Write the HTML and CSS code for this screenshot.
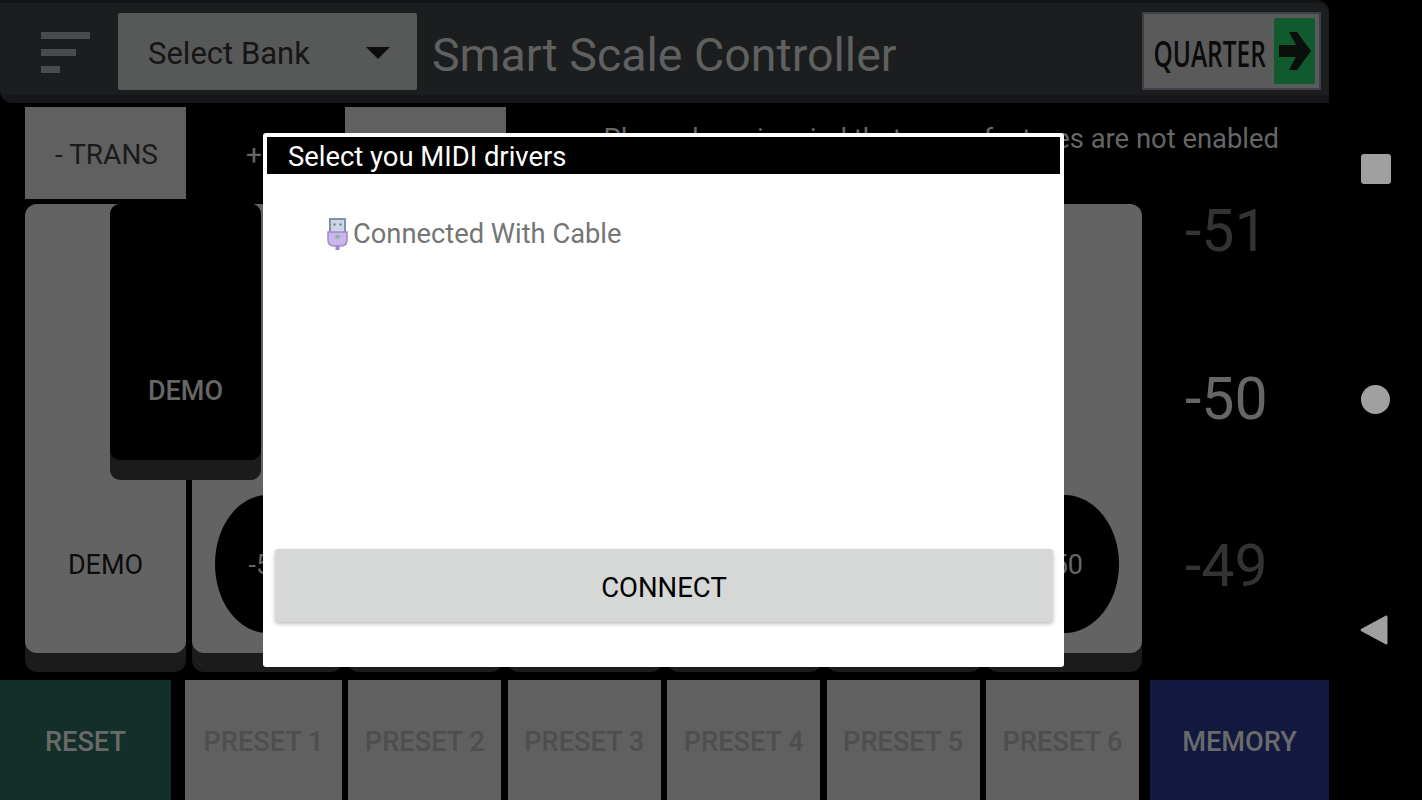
FILE: index.html
```html
<!DOCTYPE html>
<html lang="en">

<head>
    <meta charset="UTF-8">
    <title>Smart Scale Controller</title>
    <link rel="stylesheet" href="styles.css">
</head>

<body>
    <div class="app">
        <div class="topbar">
            <div class="menu-icon">
                <span class="bar bar-l"></span>
                <span class="bar bar-m"></span>
                <span class="bar bar-s"></span>
            </div>
            <div class="bank-select">
                <span>Select Bank</span>
                <span class="caret"></span>
            </div>
            <div class="title">Smart Scale Controller</div>
            <div class="quarter">
                <span class="quarter-text"><span class="quarter-label">QUARTER</span></span>
                <span class="quarter-arrow">
                    <svg width="32" height="38" viewBox="0 0 32 38">
                        <path d="M0 13H17L10 0H18L32 19L18 38H10L17 25H0Z" fill="#0b0f0c" />
                    </svg>
                </span>
            </div>
        </div>

        <div class="trans-row">
            <div class="trans-btn">- TRANS</div>
            <div class="trans-btn trans-plus">+ TRANS</div>
            <div class="trans-btn"></div>
            <div class="notice">Please keep in mind that some features are not enabled</div>
        </div>

        <div class="keys">
            <div class="key key-first"><div class="key-face"><div class="key-label">DEMO</div></div></div>
            <div class="key key-second"><div class="key-face"><div class="key-oval">-51</div></div></div>
            <div class="key"><div class="key-face"><div class="key-oval">-51</div></div></div>
            <div class="key"><div class="key-face"><div class="key-oval">-51</div></div></div>
            <div class="key"><div class="key-face"><div class="key-oval">-50</div></div></div>
            <div class="key"><div class="key-face"><div class="key-oval">-50</div></div></div>
            <div class="key"><div class="key-face"><div class="key-oval">-50</div></div></div>
            <div class="black-key"><div class="black-face">DEMO</div></div>
            <div class="octaves">
                <div class="octave octave-dim">-51</div>
                <div class="octave">-50</div>
                <div class="octave octave-dim">-49</div>
            </div>
        </div>

        <div class="presets">
            <div class="pad pad-reset">RESET</div>
            <div class="preset-group">
                <div class="pad pad-first">PRESET 1</div>
                <div class="pad">PRESET 2</div>
                <div class="pad">PRESET 3</div>
                <div class="pad">PRESET 4</div>
                <div class="pad">PRESET 5</div>
                <div class="pad">PRESET 6</div>
            </div>
            <div class="pad pad-memory">MEMORY</div>
        </div>
    </div>

    <div class="navbar">
        <span class="nav-square"></span>
        <span class="nav-circle"></span>
        <svg class="nav-back" width="28" height="32" viewBox="0 0 28 32">
            <path d="M26 1.5Q27.500 1 27.500 3V29Q27.500 31 26 30.500L1 17Q0 16 1 15Z" fill="#a0a0a0" />
        </svg>
    </div>

    <div class="dialog">
        <div class="dialog-head">Select you MIDI drivers</div>
        <div class="driver">
            <svg class="usb-icon" width="21" height="32" viewBox="0 0 21 32">
                <rect x="3" y="1" width="15" height="15" fill="#cdd6e2" stroke="#7f93a8" stroke-width="2" />
                <rect x="6.500" y="5.500" width="2" height="2" fill="#5f7286" />
                <rect x="12.500" y="5.500" width="2" height="2" fill="#5f7286" />
                <path d="M1 14H20V22Q20 28 14 28H7Q1 28 1 22Z" fill="#cbb6e8" stroke="#a487d2" stroke-width="1.500" />
                <rect x="8.500" y="17" width="4" height="3.500" fill="#7fb89a" />
                <rect x="8.500" y="28" width="4" height="4" fill="#a487d2" />
            </svg>
            <span>Connected With Cable</span>
        </div>
        <div class="connect">CONNECT</div>
    </div>
</body>

</html>
```

FILE: styles.css
```css
* {
    padding: 0;
    margin: 0;
    box-sizing: border-box;
}

body {
    width: 1422px;
    height: 800px;
    background-color: #000;
    display: flex;
    overflow: hidden;
    position: relative;
    font-family: Roboto, "Liberation Sans", sans-serif;
}

.app {
    width: 1329px;
    display: flex;
    flex-direction: column;
}

/* top bar */
.topbar {
    height: 103px;
    background-color: #1c1d1f;
    border-top: 3px solid #131416;
    border-bottom: 8px solid #16171a;
    border-radius: 0 12px 0 12px;
    display: flex;
    align-items: center;
    padding: 5px 0 0 41px;
}

.menu-icon {
    width: 50px;
    display: flex;
    flex-direction: column;
    gap: 10px;
    margin-right: 27px;
    margin-top: 1px;
}

.bar {
    height: 7px;
    background-color: #4a4b4c;
    display: block;
}

.bar-l {
    width: 49px;
}

.bar-m {
    width: 35px;
}

.bar-s {
    width: 19px;
}

.bank-select {
    width: 299px;
    height: 77px;
    background-color: #575858;
    border-radius: 2px;
    display: flex;
    align-items: center;
    justify-content: space-between;
    padding: 3px 27px 0 30px;
    font-size: 31px;
    color: #151515;
}

.caret {
    width: 0;
    height: 0;
    border-left: 12px solid transparent;
    border-right: 12px solid transparent;
    border-top: 12px solid #0c0c0c;
}

.title {
    font-size: 46.500px;
    color: #5f6060;
    margin-left: 15px;
    margin-top: 6px;
    flex: 1;
}

.quarter {
    width: 179px;
    height: 78px;
    margin-right: 8px;
    margin-top: -2px;
    background-color: #5a5a5a;
    border: 2px solid #3f3f3f;
    outline: 1px solid #555a6b;
    outline-offset: -3px;
    display: flex;
    align-items: center;
    padding: 4px;
}

.quarter-text {
    width: 123px;
    flex: none;
    margin-right: 3px;
    margin-top: 6px;
    display: flex;
    justify-content: center;
}

.quarter-label {
    flex: none;
    font-family: "Open Sans", sans-serif;
    font-size: 36px;
    font-weight: 600;
    color: #0a0a0a;
    transform: scaleX(0.68);
    white-space: nowrap;
    line-height: 1;
}

.quarter-arrow {
    width: 42px;
    height: 66px;
    background-color: #11592e;
    border-radius: 2px;
    display: flex;
    align-items: center;
    justify-content: flex-end;
    padding-right: 4px;
}

/* transpose row */
.trans-row {
    margin-top: 4px;
    height: 92px;
    padding-left: 25px;
    display: flex;
}

.trans-btn {
    width: 161px;
    background-color: #606060;
    color: #1a1a1a;
    font-size: 28px;
    padding: 3px 0 0 2px;
    display: flex;
    align-items: center;
    justify-content: center;
}

.trans-plus {
    width: 159px;
    background-color: #000;
    color: #666;
    justify-content: flex-start;
    padding-left: 60px;
    white-space: nowrap;
}

.notice {
    margin-left: auto;
    padding-right: 50px;
    padding-top: 16px;
    font-size: 27.400px;
    color: #666;
    white-space: nowrap;
}

/* keyboard */
.keys {
    margin-top: 5px;
    height: 468px;
    padding-left: 25px;
    display: flex;
    gap: 4px;
    position: relative;
}

.key {
    width: 155.800px;
    background-color: #1b1b1b;
    border-radius: 12px;
}

.key-first {
    width: 161px;
    margin-right: 2px;
}

.key-second {
    width: 151px;
}

.key-face {
    height: 449px;
    background-color: #636363;
    border-radius: 12px;
    display: flex;
    align-items: flex-end;
    justify-content: center;
    padding-bottom: 20px;
}

.key-label,
.key-oval {
    height: 138px;
    padding-top: 2px;
    display: flex;
    align-items: center;
    justify-content: center;
    font-size: 27px;
}

.key-label {
    color: #0c0c0c;
}

.key-oval {
    width: 109px;
    background-color: #000;
    border-radius: 50%;
    color: #666;
}

.key-second .key-oval {
    width: 105px;
}

.black-key {
    position: absolute;
    left: 110px;
    top: 0;
    width: 151px;
    height: 276px;
    background-color: #1b1b1b;
    border-radius: 10px;
}

.black-face {
    height: 256px;
    background-color: #000;
    border-radius: 10px;
    color: #666;
    font-size: 27px;
    font-weight: 500;
    display: flex;
    align-items: flex-end;
    justify-content: center;
    padding-bottom: 53px;
}

.octaves {
    position: absolute;
    left: 1185px;
    top: -2px;
    display: flex;
    flex-direction: column;
    gap: 110.500px;
}

.octave {
    font-size: 59px;
    height: 57px;
    line-height: 57px;
    color: #666;
}

.octave-dim {
    color: #333;
}

/* preset pads */
.presets {
    margin-top: 8px;
    height: 120px;
    display: flex;
}

.preset-group {
    width: 954px;
    margin: 0 11px 0 14px;
    display: flex;
    gap: 6.400px;
}

.pad {
    flex: 1;
    background-color: #606060;
    color: #4e4e4e;
    font-size: 27.200px;
    font-weight: 500;
    padding-top: 3px;
    display: flex;
    align-items: center;
    justify-content: center;
}

.pad-first {
    flex: none;
    width: 157px;
}

.pad-reset {
    flex: none;
    width: 171px;
    background-color: #123029;
    color: #6a6a6a;
}

.pad-memory {
    flex: none;
    width: 179px;
    background-color: #13183f;
    color: #6a6a6a;
}

/* android nav bar */
.navbar {
    width: 93px;
    height: 800px;
    padding: 154px 0 154px 32px;
    display: flex;
    flex-direction: column;
    justify-content: space-between;
    align-items: flex-start;
}

.nav-square {
    width: 30px;
    height: 30px;
    background-color: #a0a0a0;
    border-radius: 3px;
}

.nav-circle {
    width: 29px;
    height: 29px;
    background-color: #a0a0a0;
    border-radius: 50%;
}

.nav-back {
    margin-left: -1px;
}

/* dialog */
.dialog {
    position: absolute;
    left: 263px;
    top: 133px;
    width: 801px;
    height: 534px;
    background-color: #fff;
    border-radius: 3px;
    padding: 4px;
    display: flex;
    flex-direction: column;
}

.dialog-head {
    height: 37px;
    line-height: 40px;
    background-color: #000;
    color: #fff;
    font-size: 27.400px;
    padding-left: 21px;
    overflow: hidden;
}

.driver {
    margin-top: 44px;
    padding-left: 60px;
    display: flex;
    align-items: center;
    gap: 5px;
    font-size: 27.300px;
    color: #757575;
}

.connect {
    margin: auto 7px 41px 8px;
    height: 73px;
    background-color: #d6d8d7;
    border-radius: 3px;
    box-shadow: 0 2px 4px rgba(0, 0, 0, 0.25);
    color: #000;
    font-size: 27.500px;
    padding-top: 4px;
    display: flex;
    align-items: center;
    justify-content: center;
}
```
